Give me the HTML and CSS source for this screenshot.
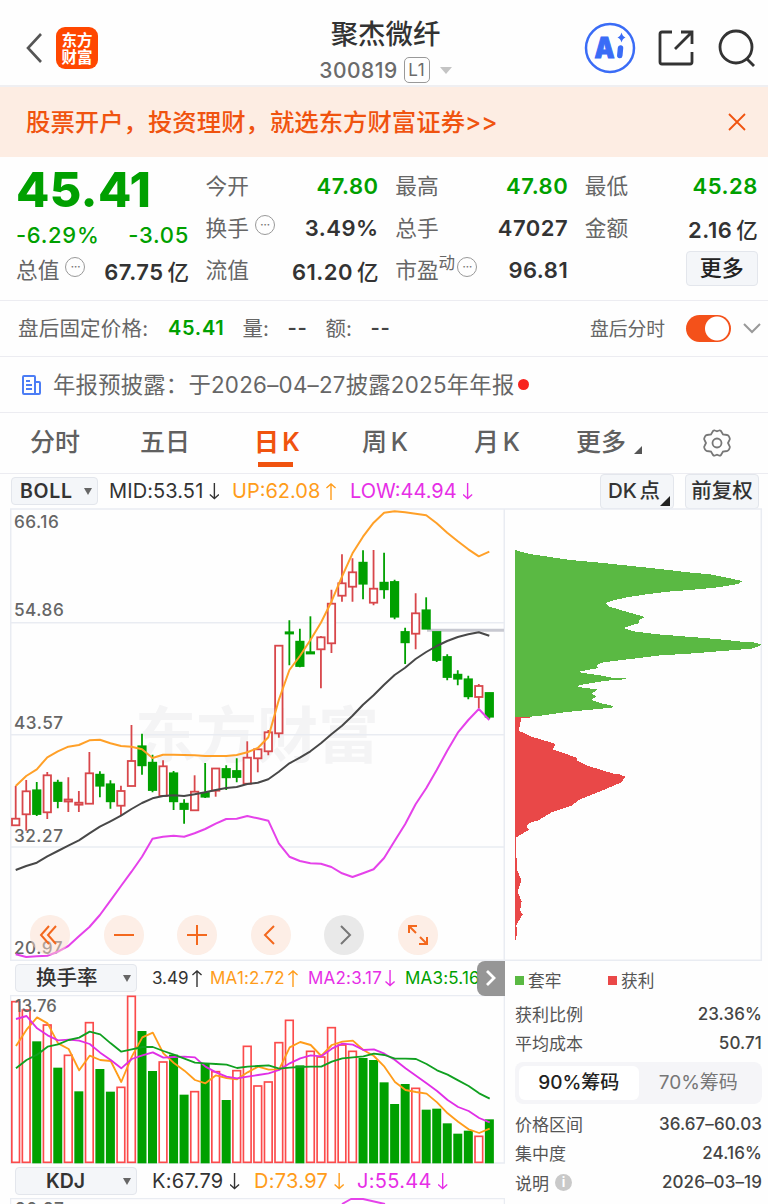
FILE: index.html
```html
<!DOCTYPE html>
<html lang="zh-CN">
<head>
  <meta charset="UTF-8" />
  <meta name="viewport" content="width=device-width, initial-scale=1.0" />
  <title>聚杰微纤 300819</title>
  <link rel="stylesheet" href="styles.css">
</head>
<body>
  <header class="topbar">
    <div class="topbar-left">
      <svg class="back" viewBox="0 0 18 32"><path d="M16 2 3 16l13 14" /></svg>
      <div class="logo">东方<br>财富</div>
    </div>
    <div class="stock">
      <h1>聚杰微纤</h1>
      <div class="code"><span>300819</span><span class="level">L1</span><i class="tri"></i></div>
    </div>
    <div class="topbar-right">
      <svg width="52" height="52" viewBox="0 0 52 52" class="ai">
        <circle cx="26" cy="26" r="24" />
        <text x="10.500" y="36" textLength="20" lengthAdjust="spacingAndGlyphs">A</text>
        <path class="ai-i" d="M36.500 26 35.800 33.500" />
        <path class="ai-star" d="M37.500 10.500q1 4 4 5-3 1-4 5-1-4-4-5 3-1 4-5z" />
      </svg>
      <svg width="38" height="38" viewBox="0 0 38 38" class="line-icon">
        <path d="M15 3H5q-2 0-2 2v28q0 2 2 2h28q2 0 2-2V23M24 3h11v12M35 3 18 20" />
      </svg>
      <svg width="40" height="40" viewBox="0 0 40 40" class="line-icon">
        <circle cx="19" cy="19" r="16" /><path d="m30 31 7 7" />
      </svg>
    </div>
  </header>

  <div class="banner">
    <span>股票开户，投资理财，就选东方财富证券&gt;&gt;</span>
    <svg width="18" height="18" viewBox="0 0 18 18"><path d="M1 1l16 16M17 1 1 17" /></svg>
  </div>

  <section class="quote">
    <div class="quote-col">
      <div class="price">45.41</div>
      <div class="row change"><b class="down">-6.29%</b><b class="down">-3.05</b></div>
      <div class="row"><span>总值<i class="dots">···</i></span><b>67.75<em>亿</em></b></div>
    </div>
    <div class="quote-col">
      <div class="row"><span>今开</span><b class="down">47.80</b></div>
      <div class="row"><span>换手<i class="dots">···</i></span><b>3.49%</b></div>
      <div class="row"><span>流值</span><b>61.20<em>亿</em></b></div>
    </div>
    <div class="quote-col">
      <div class="row"><span>最高</span><b class="down">47.80</b></div>
      <div class="row"><span>总手</span><b>47027</b></div>
      <div class="row"><span>市盈<sup>动</sup><i class="dots tight">···</i></span><b>96.81</b></div>
    </div>
    <div class="quote-col">
      <div class="row"><span>最低</span><b class="down">45.28</b></div>
      <div class="row"><span>金额</span><b>2.16<em>亿</em></b></div>
      <div class="row end"><button class="chip more">更多</button></div>
    </div>
  </section>

  <section class="after">
    <span class="after-label">盘后固定价格:</span><b class="down">45.41</b>
    <span class="after-vol">量:</span><b class="dash">--</b>
    <span class="after-amt">额:</span><b class="dash">--</b>
    <span class="after-time">盘后分时</span>
    <span class="toggle"></span>
    <svg width="20" height="12" viewBox="0 0 20 12"><path d="m2 2 8 8 8-8" /></svg>
  </section>

  <section class="notice">
    <svg width="21" height="22" viewBox="0 0 21 22">
      <path d="M3 2h10q1 0 1 1v17H3q-1 0-1-1V3q0-1 1-1zM14 8h4q1 0 1 1v10q0 1-1 1h-4M5 7h4M5 11h6M5 15h6" />
    </svg>
    <span>年报预披露：于2026–04–27披露2025年年报</span>
    <i class="red-dot"></i>
  </section>

  <nav class="tabs">
    <a>分时</a>
    <a>五日</a>
    <a class="active">日 K</a>
    <a>周 K</a>
    <a>月 K</a>
    <a>更多<i class="corner"></i></a>
    <svg width="30" height="30" viewBox="0 0 30 30">
      <path d="M11 3q1-1 2-.5l2 .8 2-.8q1-.5 2 .5l2 3.500 4 .5q1.500.3 2 1.500l.8 2q.2 1-.6 2L26 15l1.200 2.500q.8 1 .6 2l-.8 2q-.5 1.200-2 1.500l-4 .5-2 3.500q-1 1-2 .5l-2-.8-2 .8q-1 .5-2-.5l-2-3.500-4-.5q-1.500-.3-2-1.500l-.8-2q-.2-1 .6-2L4 15l-1.200-2.500q-.8-1-.6-2l.8-2q.5-1.200 2-1.500l4-.5z" />
      <circle cx="15" cy="15" r="4.500" />
    </svg>
  </nav>

  <div class="boll">
    <button class="chip select">BOLL<i class="tri dark"></i></button>
    <span class="v-mid">MID:53.51<u class="arrow"></u></span>
    <span class="v-up orange">UP:62.08<u class="arrow up"></u></span>
    <span class="v-low pink">LOW:44.94<u class="arrow"></u></span>
    <button class="chip dk">DK 点<i class="corner"></i></button>
    <button class="chip fq">前复权</button>
  </div>

  <main class="charts">
    <div class="left">
      <div class="kline">
        <svg id="kline" width="495" height="453" viewBox="10 508 495 453"></svg>
        <div class="tools">
          <span><svg viewBox="0 0 40 40"><path d="M19 11l-8 9 8 9M26 11l-8 9 8 9" /></svg></span>
          <span><svg viewBox="0 0 40 40"><path d="M10 20h20" /></svg></span>
          <span><svg viewBox="0 0 40 40"><path d="M10 20h20M20 10v20" /></svg></span>
          <span><svg viewBox="0 0 40 40"><path d="M23 11l-9 9 9 9" /></svg></span>
          <span class="gray"><svg viewBox="0 0 40 40"><path d="M17 11l9 9-9 9" /></svg></span>
          <span><svg viewBox="0 0 40 40"><path d="M11 18v-7h8M11 11l7 7M29 22v7h-8M29 29l-7-7" /></svg></span>
        </div>
      </div>
      <div class="indicator turnover">
        <button class="chip wide">换手率<i class="tri dark"></i></button>
        <span class="t0">3.49<u class="arrow up"></u></span>
        <span class="t1 orange">MA1:2.72<u class="arrow up"></u></span>
        <span class="t2 pink">MA2:3.17<u class="arrow"></u></span>
        <span class="t3 green">MA3:5.16<u class="arrow"></u></span>
        <div class="next"><svg width="12" height="18" viewBox="0 0 12 18"><path d="m2 2 7 7-7 7" /></svg></div>
      </div>
      <svg id="turnover" width="495" height="169" viewBox="30 105 1485 507"></svg>
      <div class="indicator kdj">
        <button class="chip wide latin">KDJ<i class="tri dark"></i></button>
        <span class="k0">K:67.79<u class="arrow"></u></span>
        <span class="k1 orange">D:73.97<u class="arrow"></u></span>
        <span class="k2 pink">J:55.44<u class="arrow"></u></span>
      </div>
      <svg class="kdj-chart" width="495" height="7" viewBox="10 1198 495 7">
        <path class="frame" d="M10.500 1205v-6.500h494v6.500" />
        <text class="axis" x="15" y="1214.500">90.97</text>
        <path class="low" d="M342 1204l9-5h12l22 5" />
      </svg>
    </div>

    <aside class="right">
      <svg id="chips" width="258" height="453" viewBox="505 508 258 453"></svg>
      <div class="legend"><span class="g">套牢</span><span class="r">获利</span></div>
      <div class="stat"><span>获利比例</span><b>23.36%</b></div>
      <div class="stat"><span>平均成本</span><b>50.71</b></div>
      <div class="switch"><span class="on">90%筹码</span><span>70%筹码</span></div>
      <div class="stat"><span>价格区间</span><b>36.67–60.03</b></div>
      <div class="stat"><span>集中度</span><b>24.16%</b></div>
      <div class="stat last"><span>说明<i class="info">i</i></span><b>2026–03–19</b></div>
    </aside>
  </main>
  <script src="script.js"></script>
</body>
</html>
```
FILE: styles.css
```css
:root {
  --green: #00a000;
  --orange: #f0530f;
  --text: #333;
  --label: #666;
  --line: #ececf1;
}
* {
  box-sizing: border-box;
  margin: 0;
  padding: 0;
}
body {
  width: 768px;
  height: 1204px;
  overflow: hidden;
  background: #fefefe;
  color: var(--text);
  font-family: Inter, "Noto Sans CJK SC", sans-serif;
  white-space: nowrap;
}
i, em, u {
  font-style: normal;
  text-decoration: none;
}
svg {
  display: block;
  flex: none;
  fill: none;
}
button {
  font: inherit;
  color: inherit;
}
.down, .green { color: var(--green); }
.orange { color: #ff9c1a; }
.pink { color: #e62ee6; }

.topbar {
  height: 87px;
  display: grid;
  grid-template-columns: 1fr 140px 1fr;
  border-bottom: 2px solid #efeff2;
}
.topbar-left {
  display: flex;
  align-items: center;
  gap: 13px;
  padding: 9px 0 0 25px;
}
.back {
  width: 18px;
  height: 32px;
  stroke: #555;
  stroke-width: 2.600;
}
.logo {
  width: 42px;
  height: 42px;
  border-radius: 9px;
  background: #ff4700;
  color: #fff;
  font: 700 15.500px/17px "Noto Sans CJK SC", sans-serif;
  text-align: center;
  padding-top: 4px;
}
.stock {
  display: flex;
  flex-direction: column;
  align-items: center;
  padding: 15px 0 0 3px;
}
.stock h1 {
  font-size: 27.400px;
  font-weight: 500;
  line-height: 38px;
}
.code {
  display: flex;
  align-items: center;
  height: 34px;
  font-size: 21px;
  font-weight: 500;
  color: #6b6b6b;
  letter-spacing: 0.500px;
}
.level {
  width: 26px;
  height: 26px;
  margin-left: 6px;
  border: 1.500px solid #999;
  border-radius: 5px;
  font-size: 17px;
  font-weight: 400;
  line-height: 24px;
  text-align: center;
}
.tri {
  border: 6px solid transparent;
  border-top: 7px solid #c4c4c4;
  border-bottom: 0;
  margin-left: 10px;
}
.tri.dark {
  border-width: 7px 4px 0;
  border-top-color: #666;
  margin: 0;
}
.topbar-right {
  display: flex;
  align-items: center;
  justify-content: flex-end;
  padding: 9px 11px 0 0;
}
.ai { margin-right: 21px; stroke: #3a6cf6; stroke-width: 2.500; }
.ai text { font: 900 28px Inter; fill: #3a6cf6; stroke: #3a6cf6; stroke-width: 1; }
.ai-i { stroke-width: 5.500; stroke-linecap: round; }
.ai-star { fill: #3a6cf6; stroke: none; }
.line-icon { stroke: #333; stroke-width: 2.800; }
.line-icon + .line-icon { margin-left: 22px; }

.banner {
  height: 70px;
  background: #fdede3;
  color: #f0530f;
  font-size: 24.400px;
  font-weight: 500;
  display: flex;
  align-items: center;
  justify-content: space-between;
  padding: 0 22px 0 26px;
}
.banner span { padding-bottom: 3px; }
.banner svg { stroke: var(--orange); stroke-width: 1.800; }

.quote {
  height: 144px;
  border-bottom: 1px solid var(--line);
  display: grid;
  grid-template-columns: repeat(4, 173px);
  column-gap: 16.600px;
  padding: 8px 0 0 16px;
}
.row {
  height: 42px;
  display: flex;
  align-items: center;
  justify-content: space-between;
  font-size: 21.700px;
  color: var(--label);
}
.row b {
  font-size: 22px;
  font-weight: 600;
  color: var(--text);
  letter-spacing: 0.500px;
}
.row b.down { color: var(--green); }
.row em { font-weight: 500; margin-left: 4px; font-size: 21.500px; letter-spacing: 0; }
.row span { display: flex; align-items: center; padding-bottom: 4px; }
.price {
  height: 50px;
  font-size: 48.500px;
  font-weight: 800;
  line-height: 50px;
  color: var(--green);
  letter-spacing: 0.300px;
}
.change { height: 34px; padding-top: 6px; }
.change b { font-weight: 500; letter-spacing: 0.700px; }
.dots {
  width: 20px;
  height: 20px;
  border: 1.500px solid #999;
  border-radius: 50%;
  margin: -3px 0 0 6px;
  font-size: 13px;
  line-height: 16px;
  text-align: center;
  letter-spacing: -0.500px;
  color: #777;
}
.dots.tight { margin-left: 2px; }
.row sup { font-size: 16.500px; line-height: 20px; margin-top: -10px; }
.row.end { justify-content: flex-end; }
.chip {
  border: 1.500px solid #e3e6ec;
  border-radius: 4px;
  background: #f4f6f9;
}
.more {
  width: 72px;
  height: 35px;
  font-size: 22px;
  font-weight: 500;
  line-height: 29px;
  color: #222;
  margin: -3px 0 0;
}

.after {
  height: 56px;
  border-bottom: 1px solid var(--line);
  display: flex;
  align-items: center;
  padding: 0 0 1px 18px;
  font-size: 20.500px;
  color: var(--label);
}
.after b { font-size: 20px; font-weight: 600; letter-spacing: 0.700px; }
.after-label { width: 150px; letter-spacing: 0.200px; }
.after-vol { margin-left: 18px; width: 45px; }
.after-amt { margin-left: 19px; width: 45px; }
.after .dash { width: 19px; color: #444; }
.after-time { margin-left: auto; font-size: 18.800px; }
.after > span:not(.toggle) { padding-bottom: 2px; }
.toggle {
  width: 45px;
  height: 27px;
  margin: 0 11px 0 21px;
  border-radius: 14px;
  background: radial-gradient(circle at 31px 50%, #fff 11.500px, #f4511a 12.500px);
}
.after svg { stroke: #999; stroke-width: 2; margin-right: 6px; }

.notice {
  height: 56px;
  border-bottom: 1px solid var(--line);
  display: flex;
  align-items: center;
  padding-left: 21px;
  font-size: 22.300px;
  letter-spacing: 0.270px;
  color: var(--label);
}
.notice span { padding-bottom: 3px; }
.notice svg { stroke: #4c7df5; stroke-width: 2; margin-right: 11px; }
.red-dot {
  width: 11px;
  height: 11px;
  border-radius: 50%;
  background: #f8231f;
  margin-left: 4px;
}

.tabs {
  height: 61px;
  border-bottom: 1px solid var(--line);
  display: grid;
  grid-template-columns: 110px 114px 108px 112px 102px 126px 30px;
  align-items: center;
  padding-left: 30px;
  font-size: 25px;
  font-weight: 500;
  color: #606060;
}
.tabs a { line-height: 59px; height: 60px; word-spacing: -3px; }
.tabs .active {
  color: #f0530f;
  font-weight: 600;
  background: linear-gradient(#f0530f, #f0530f) 4px 49px / 35px 5px no-repeat;
}
.tabs svg { stroke: #777; stroke-width: 1.800; }
.corner {
  display: inline-block;
  border: 4px solid #555;
  border-top-color: transparent;
  border-left-color: transparent;
  margin: 0 0 -3px 8px;
}

.boll {
  height: 34px;
  display: flex;
  align-items: center;
  padding-left: 11px;
  font-size: 20px;
}
.select {
  width: 87px;
  height: 28px;
  display: flex;
  align-items: center;
  justify-content: space-between;
  padding: 0 5px 0 8px;
  font-size: 19.500px;
  font-weight: 600;
  letter-spacing: 0.700px;
}
.boll > span, .indicator > span { display: flex; align-items: center; }
.v-mid { margin-left: 11px; width: 123px; letter-spacing: 0.100px; }
.v-up { width: 118px; }
.v-low { width: 131px; }
/* thin arrow: a stem with an open head */
.arrow {
  width: 10px;
  height: 17px;
  margin-left: 6px;
  background: currentColor;
  clip-path: polygon(43% 0, 57% 0, 57% 86%, 91% 67%, 100% 73%, 50% 100%, 0 73%, 9% 67%, 43% 86%);
}
.arrow.up { transform: rotate(180deg); }
.dk, .fq {
  height: 35px;
  font-size: 20.500px;
  font-weight: 500;
  line-height: 30px;
}
.dk { width: 74px; margin-left: auto; display: flex; align-items: center; justify-content: center; word-spacing: -3px; }
.dk .corner { border-width: 5px; border-right-color: #222; border-bottom-color: #222; margin: 19px -4px 0 0; }
.fq { width: 74px; margin: 0 9px 0 11px; }

.charts {
  display: grid;
  grid-template-columns: 495px 257px;
  padding-left: 10px;
}
.left { height: 696px; overflow: hidden; }
.kline { height: 453px; position: relative; }
.tools {
  position: absolute;
  left: 20px;
  bottom: 6px;
  display: flex;
  gap: 33.500px;
}
.tools span {
  width: 40px;
  height: 40px;
  border-radius: 50%;
  background: rgba(252, 222, 205, 0.5);
}
.tools svg { stroke: #f3681e; stroke-width: 2; }
.tools .gray { background: #e9e9e9; }
.tools .gray svg { stroke: #777; }
.grid, .frame { stroke: #e9ecf2; stroke-width: 1.500; }
.axis { font: 500 17.200px Inter; fill: #666; letter-spacing: 0.500px; }
.watermark { font: 700 61px "Noto Sans CJK SC"; fill: #f4f4f5; }
.level-line { stroke: #c8c9d1; stroke-width: 3; }
.rise { stroke: #d8474b; fill: #fff; stroke-width: 1.800; }
.fall { stroke: #00a000; fill: #00a000; stroke-width: 1.800; }
.up-line, .mid, .low { stroke-width: 2; stroke-linejoin: round; }
.up-line { stroke: #ffa028; }
.mid { stroke: #484848; }
.low { stroke: #e542ea; }
.bar-rise { stroke: #fb4b4b; stroke-width: 5; fill: #fff; }
.bar-fall { fill: #00a000; }
#turnover .axis { font-size: 50px; letter-spacing: 0.500px; }
#turnover .frame { stroke-width: 4; }
.ma { stroke-width: 5.500; stroke-linejoin: round; }

.indicator {
  height: 34px;
  display: flex;
  align-items: center;
  padding-left: 5px;
  font-size: 17px;
}
.wide {
  width: 122px;
  height: 28px;
  display: flex;
  align-items: center;
  justify-content: space-between;
  padding: 0 5px 0 20px;
  font-size: 20.500px;
  font-weight: 500;
  line-height: 24px;
}
.latin { padding-left: 30px; font-weight: 600; font-size: 19.500px; }
.t0 { margin-left: 15px; width: 58px; }
.t1 { width: 98px; }
.t2 { width: 97px; }
.t3 { width: 72px; }
.t1, .t2, .t3 { letter-spacing: 0.200px; }
.turnover .arrow { margin-left: 3px; }
.next {
  width: 28px;
  height: 35px;
  flex: none;
  border-radius: 8px 0 0 8px;
  background: rgba(136, 136, 136, 0.88);
  display: flex;
  align-items: center;
  justify-content: center;
  z-index: 1;
}
.next svg { stroke: #fff; stroke-width: 2.800; }
.kdj { height: 34px; font-size: 20px; letter-spacing: 0.300px; }
.k0 { margin-left: 15px; width: 102px; }
.k1 { width: 103px; }

.legend, .stat {
  display: flex;
  align-items: center;
  font-size: 17px;
  color: #555;
}
.legend { height: 38px; padding-left: 10px; }
.legend span { display: flex; align-items: center; width: 93px; font-size: 16.700px; }
.legend span::before { content: ""; width: 9px; height: 9px; margin-right: 4px; background: #5ab943; }
.legend .r::before { background: #ea4848; }
.stat { height: 29px; padding-left: 10px; justify-content: space-between; }
.stat b { font-weight: 500; color: #444; font-size: 17px; letter-spacing: 0.100px; }
.stat span { display: flex; align-items: center; }
.stat.last { height: 30px; }
.info {
  width: 17px;
  height: 17px;
  margin-left: 6px;
  border-radius: 50%;
  background: #c9c9c9;
  color: #fff;
  font-size: 13px;
  font-weight: 700;
  line-height: 17px;
  text-align: center;
}
.switch {
  height: 42px;
  margin: 5px 0 5px 10px;
  padding: 4px;
  border-radius: 8px;
  background: #f5f5f8;
  display: grid;
  grid-template-columns: 1fr 1fr;
  font-size: 19px;
  line-height: 34px;
  text-align: center;
  color: #777;
}
.switch .on { background: #fff; border-radius: 6px; color: #222; font-weight: 500; }
```
FILE: script.js
```js
// [rise?, high, body top, body bottom, low]
const candles = [
  [1, 786, 818.7, 825.3, 825.3], [1, 780, 791.3, 814.3, 830.7], [0, 782, 790.3, 814, 816],
  [1, 772, 775.3, 812.3, 819], [0, 779.7, 782.7, 801, 808.3], [1, 777.3, 799.5, 801.5, 812],
  [1, 791, 802.7, 804.7, 812], [1, 752, 773.3, 803.7, 803.7], [0, 771.3, 774.7, 785.7, 797.3],
  [0, 780.3, 784.3, 801.3, 808.7], [1, 785.7, 791, 805.7, 816], [1, 725, 761, 786, 786],
  [0, 733.7, 746.3, 765.3, 774.7], [0, 754.7, 762.7, 790, 792.3], [1, 760.3, 766.3, 796, 796],
  [0, 771, 773.3, 801.3, 810], [0, 799.3, 803.7, 809, 823.7], [1, 775.3, 791.7, 810.3, 810.3],
  [0, 763, 793, 796.7, 798], [1, 768.5, 768.5, 790.7, 796.7], [0, 765.3, 769, 777.3, 790],
  [0, 758.3, 771, 777, 782.3], [1, 741.3, 757.7, 783.7, 783.7], [1, 749.3, 749.3, 758.3, 772.3],
  [1, 730, 732.3, 751.3, 755.3], [1, 645.7, 645.7, 733.3, 737.7], [0, 620.3, 632.3, 633.5, 665.3],
  [0, 628.7, 641.7, 666, 667.3], [0, 616.3, 652.2, 653.5, 653.5], [1, 636, 637.3, 649.3, 688.3],
  [1, 589.7, 603.7, 643.3, 653], [1, 554.3, 583.3, 595.7, 601.7], [1, 558.3, 572.3, 586.7, 601.7],
  [0, 550.3, 562.7, 583.7, 599.3], [1, 550, 588.7, 602.7, 605.3], [0, 552.7, 582.7, 589.3, 598.7],
  [0, 579.7, 582, 616.7, 619.3], [0, 627.7, 632, 642.3, 664], [1, 593.3, 613.3, 633.7, 649.3],
  [0, 597.3, 610.3, 628.7, 628.7], [0, 632, 632, 660, 662], [0, 654.3, 657, 677, 680.3],
  [0, 670.3, 674.7, 678.7, 685.3], [0, 675.7, 679.3, 696.3, 699.3], [1, 684, 686, 697, 708.3],
  [0, 692.7, 693, 716.7, 718.7]
];

const boll = {
  mid: [870, 866, 862.7, 856.3, 851, 845.7, 840.3, 833.3, 826.7, 821.3, 815.7, 809, 803, 798.3, 796, 795.3, 796, 794.3, 792.3, 790, 788, 787, 784, 782.7, 779.3, 771.7, 763.3, 757.7, 751.3, 743.3, 734.3, 725.7, 715.7, 704.7, 695.3, 684.7, 675, 667.7, 659, 652, 646, 641, 637, 634.3, 632.3, 635.7],
  'up-line': [786, 776, 769.3, 757.3, 751.3, 746.7, 745, 740.3, 739.7, 743.3, 746, 746.7, 749.3, 758, 754.7, 754.7, 755, 755.3, 756, 756, 756, 755, 752.3, 748, 737.3, 700, 670, 656, 640, 622.7, 601.7, 576.7, 553.3, 536.7, 522.7, 512.7, 511.3, 512.3, 513.7, 515.3, 523.3, 532.7, 541.3, 549.3, 556.3, 551.7],
  low: [954.3, 957, 956.3, 955.7, 951.7, 946, 936.3, 927, 915, 900.7, 886, 871.7, 856.7, 838.7, 836.7, 835.7, 836.7, 833.3, 829, 823.7, 819, 818.7, 816, 818.3, 820.7, 843.3, 856.7, 861, 863.3, 863.7, 867, 873.3, 877, 873.3, 869.3, 858, 841, 824.3, 804.3, 788.3, 770, 750.7, 732.7, 720, 709, 720]
};

const bars = [124, 149, 245, 194, 324, 285, 395, 187, 328, 396, 381, 108, 214, 334, 305, 285, 405, 394, 312, 334, 421, 331, 258, 377, 365, 247, 180, 317, 273, 290, 202, 254, 273, 295, 301, 368, 433, 373, 384, 450, 447, 491, 522, 513, 528, 479];
const redBars = [0, 1, 3, 5, 7, 10, 11, 14, 17, 19, 21, 22, 23, 24, 25, 26, 28, 29, 30, 31, 32, 38, 44];

const ma = {
  '#ff9c1a': [258, 209, 172, 190, 250, 267, 331, 287, 300, 303, 366, 290, 232, 218, 280, 309, 332, 360, 370, 346, 354, 358, 337, 320, 329, 328, 262, 246, 255, 288, 255, 245, 242, 270, 288, 320, 366, 390, 396, 401, 427, 460, 485, 508, 519, 506],
  '#e02ee6': [177, 168, 205, 226, 241, 239, 242, 252, 278, 300, 325, 297, 286, 277, 293, 291, 290, 292, 320, 337, 350, 355, 350, 345, 340, 330, 310, 295, 286, 289, 266, 251, 254, 270, 268, 281, 300, 325, 347, 370, 393, 420, 441, 453, 474, 487],
  '#10a020': [325, 300, 284, 260, 253, 240, 233, 215, 223, 250, 275, 268, 261, 261, 273, 284, 296, 308, 310, 312, 314, 324, 320, 318, 316, 326, 323, 321, 320, 320, 305, 295, 292, 289, 281, 285, 296, 296, 297, 312, 331, 344, 361, 378, 400, 416]
};

const points = (list, x0, step) => list.map((y, i) => `${(x0 + i * step).toFixed(1)},${y}`).join(' ');

function drawKline() {
  let out = '<text class="watermark" x="135" y="758">东方财富</text>';
  [622.7, 734.7, 847].forEach(y => { out += `<path class="grid" d="M10 ${y}h494" />`; });
  out += '<path class="frame" d="M10.700 509h493.600v451.300h-493.600z" />';
  out += '<path class="level-line" d="M427 630.300h77" />';
  [['66.16', 528], ['54.86', 616], ['43.57', 729], ['32.27', 841.5], ['20.97', 953.5]].forEach(([t, y]) => {
    out += `<text class="axis" x="14" y="${y}">${t}</text>`;
  });
  candles.forEach(([rise, high, top, bottom, low], i) => {
    const x = 15.7 + i * 10.525;
    out += `<g class="${rise ? 'rise' : 'fall'}"><path d="M${x} ${high}V${top}M${x} ${bottom}V${low}" />` +
      `<rect x="${x - 3.7}" y="${top}" width="7.400" height="${bottom - top}" /></g>`;
  });
  for (const name in boll) {
    out += `<polyline class="${name}" points="${points(boll[name], 15.7, 10.525)}" />`;
  }
  document.getElementById('kline').innerHTML = out;
}

function drawTurnover() {
  let out = '<path class="frame" d="M32 107h1481v502h-1481z" />';
  bars.forEach((y, i) => {
    const x = 47 + i * 31.58;
    out += redBars.includes(i)
      ? `<rect class="bar-rise" x="${x - 11.5}" y="${y + 1}" width="23" height="${606 - y}" />`
      : `<rect class="bar-fall" x="${x - 13.5}" y="${y - 1}" width="27" height="${611 - y}" />`;
  });
  out += '<text class="axis" x="44" y="157">13.76</text>';
  for (const color in ma) {
    out += `<polyline class="ma" stroke="${color}" points="${points(ma[color], 48, 31.58)}" />`;
  }
  document.getElementById('turnover').innerHTML = out;
}

// cost distribution outline, three units to a pixel
const trapped = '45,149 60,155 90,162 150,171 210,180 290,187 365,195 480,207 555,216 630,223 690,235 727,243 715,252 655,262 580,269 505,275 440,283 385,291 345,300 316,309 325,319 375,334 435,351 415,362 418,369 370,384 400,394 475,403 560,410 650,417 725,425 770,428 785,435 755,446 655,454 555,462 480,466 400,476 310,487 290,495 295,504 232,516 305,527 340,534 377,534 377,538 338,540 300,545 240,555 232,561 292,568 274,582 290,588 274,600 305,610 340,618 340,622 295,627 200,636 115,648 90,650 45,650';
const profit = '45,650 90,650 90,654 64,655 56,692 95,710 167,732 158,748 230,773 232,782 265,798 340,821 360,823 377,831 362,848 320,866 240,898 215,917 155,937 115,961 90,968 79,978 87,989 47,1013 51,1110 64,1140 53,1175 65,1205 60,1232 68,1243 58,1260 49,1275 52,1300 45,1325';

function drawChips() {
  document.getElementById('chips').innerHTML =
    '<path class="frame" d="M504 509h257.300v451.300h-257.300" />' +
    '<g transform="translate(500 500) scale(0.33333)" shape-rendering="crispEdges">' +
    `<polygon fill="#5ab943" points="${trapped}" /><polygon fill="#e94848" points="${profit}" /></g>`;
}

drawKline();
drawTurnover();
drawChips();
```
